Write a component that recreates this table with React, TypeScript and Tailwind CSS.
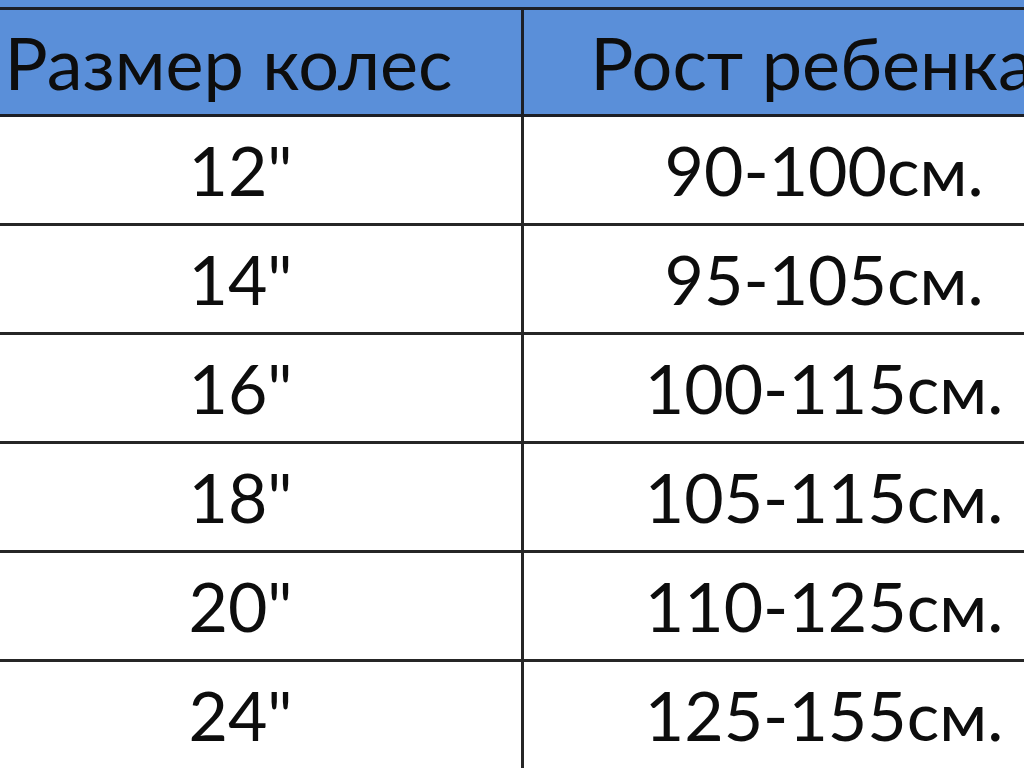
const rows = [
  ['12"', '90-100см.'],
  ['14"', '95-105см.'],
  ['16"', '100-115см.'],
  ['18"', '105-115см.'],
  ['20"', '110-125см.'],
  ['24"', '125-155см.'],
]

export default function App() {
  return (
    <div
      className="h-[768px] w-[1024px] overflow-hidden bg-white text-[#0d0d0d]"
      style={{ fontFamily: 'Lato, "Open Sans", sans-serif' }}
    >
      <div className="h-[7px] w-[1200px] bg-[#5a8fd9]" />
      <div className="ml-[-40px] w-[1200px]">
        <div className="flex h-[110px] border-y-[3px] border-[#1c1f26] bg-[#5a8fd9] text-[72px] leading-none">
          <div className="flex w-[564px] items-center justify-center border-r-[3px] border-[#1c1f26] pr-6">
            Размер колес
          </div>
          <div className="flex w-[600px] items-center justify-center pr-6">Рост ребенка</div>
        </div>
        {rows.map(([size, height]) => (
          <div
            key={size}
            className="flex h-[109px] border-b-[3px] border-[#262626] text-[68px] leading-none"
          >
            <div className="flex w-[564px] items-center justify-center border-r-[3px] border-[#262626]">
              {size}
            </div>
            <div className="flex w-[600px] items-center justify-center">{height}</div>
          </div>
        ))}
      </div>
    </div>
  )
}
